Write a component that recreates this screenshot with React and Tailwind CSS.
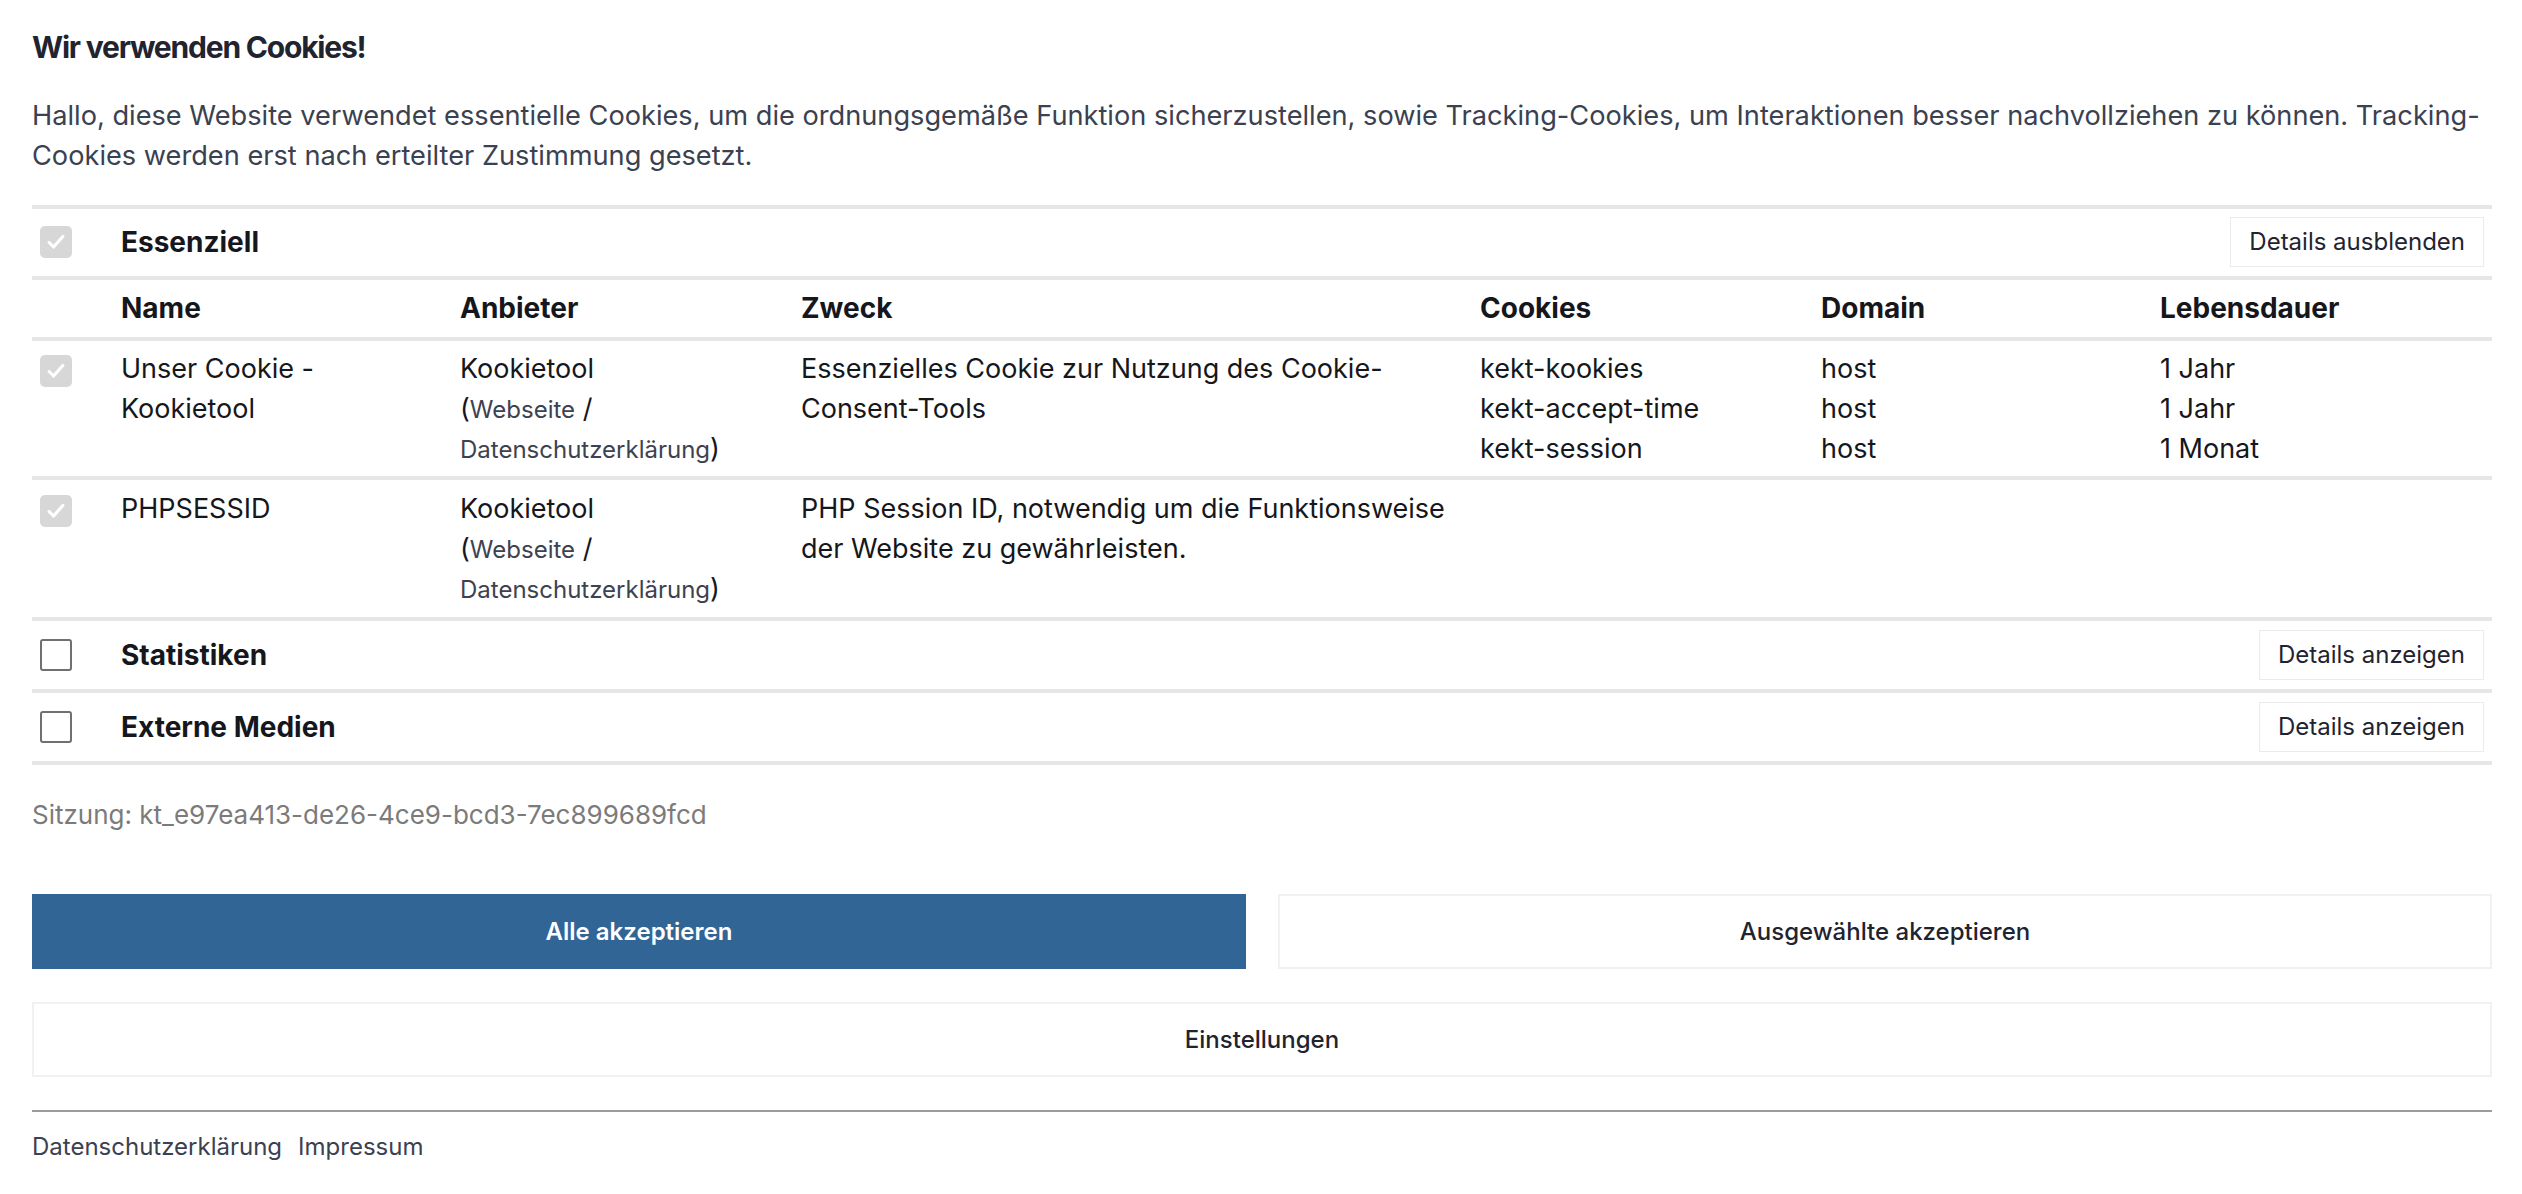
import React from "react";

function CheckedBox() {
  return (
    <div className="w-8 h-8 rounded-[5px] bg-[#d7d7d7] flex items-center justify-center">
      <svg width="22" height="22" viewBox="0 0 24 24" fill="none">
        <path d="M4.5 12.5l4.8 5L19.5 6" stroke="#ffffff" strokeWidth="3.4" strokeLinecap="round" strokeLinejoin="round" />
      </svg>
    </div>
  );
}

function EmptyBox() {
  return <div className="w-8 h-8 rounded-[3px] border-2 border-[#707070] bg-white" />;
}

function DetailsButton({ children }) {
  return (
    <button className="h-[50px] px-[18px] border border-[#ebebeb] bg-white text-[24px] leading-[30px] text-[#1f2430] mr-2">
      {children}
    </button>
  );
}

function CategoryRow({ checked, label, button, className = "" }) {
  return (
    <div className={"flex items-center border-b-4 border-[#e6e6e6] " + className}>
      <div className="w-[89px] pl-2 flex items-center">{checked ? <CheckedBox /> : <EmptyBox />}</div>
      <div className="flex-1 text-[28px] leading-[40px] font-bold text-[#15171c]">{label}</div>
      <DetailsButton>{button}</DetailsButton>
    </div>
  );
}

const gridCols = "grid grid-cols-[89px_339px_341px_679px_341px_339px_1fr]";

function Provider() {
  return (
    <div className="text-[27px] leading-[40px] text-[#15171c]">
      <div className="h-[40px]">Kookietool</div>
      <div className="h-[40px] whitespace-nowrap">
        (<span className="text-[24px] leading-none text-[#3d4250]">Webseite</span> /
      </div>
      <div className="h-[40px] whitespace-nowrap">
        <span className="text-[24px] leading-none text-[#3d4250]">Datenschutzerklärung</span>)
      </div>
    </div>
  );
}

export default function App() {
  return (
    <div className="min-h-screen bg-white pl-8 pr-[30px] pt-[29px] font-['Inter','Noto_Sans',sans-serif]">
      <h2 className="text-[30px] leading-[36px] font-bold tracking-[-0.04em] text-[#1f2430]">Wir verwenden Cookies!</h2>
      <p className="mt-[31px] text-[27.2px] leading-[40px] text-[#3a4150]">
        Hallo, diese Website verwendet essentielle Cookies, um die ordnungsgemäße Funktion sicherzustellen, sowie Tracking-Cookies, um Interaktionen besser nachvollziehen zu können. Tracking-Cookies werden erst nach erteilter Zustimmung gesetzt.
      </p>

      <div className="mt-[29px] border-t-4 border-[#e6e6e6]">
        <CategoryRow checked label="Essenziell" button="Details ausblenden" className="pt-2 pb-[9px]" />

        <div className={gridCols + " pt-2 pb-[9px] border-b-4 border-[#e6e6e6] text-[28px] leading-[40px] font-bold text-[#15171c]"}>
          <div />
          <div>Name</div>
          <div>Anbieter</div>
          <div>Zweck</div>
          <div>Cookies</div>
          <div>Domain</div>
          <div>Lebensdauer</div>
        </div>

        <div className={gridCols + " pt-2 pb-[7px] border-b-4 border-[#e6e6e6] text-[27px] leading-[40px] text-[#15171c]"}>
          <div className="pl-2 pt-[6px]"><CheckedBox /></div>
          <div className="whitespace-nowrap">Unser Cookie -<br />Kookietool</div>
          <Provider />
          <div className="whitespace-nowrap">Essenzielles Cookie zur Nutzung des Cookie-<br />Consent-Tools</div>
          <div className="whitespace-nowrap">kekt-kookies<br />kekt-accept-time<br />kekt-session</div>
          <div>host<br />host<br />host</div>
          <div className="whitespace-nowrap">1 Jahr<br />1 Jahr<br />1 Monat</div>
        </div>

        <div className={gridCols + " pt-[9px] pb-2 border-b-4 border-[#e6e6e6] text-[27px] leading-[40px] text-[#15171c]"}>
          <div className="pl-2 pt-[6px]"><CheckedBox /></div>
          <div>PHPSESSID</div>
          <Provider />
          <div className="whitespace-nowrap">PHP Session ID, notwendig um die Funktionsweise<br />der Website zu gewährleisten.</div>
          <div />
          <div />
          <div />
        </div>

        <CategoryRow label="Statistiken" button="Details anzeigen" className="py-[9px]" />
        <CategoryRow label="Externe Medien" button="Details anzeigen" className="py-[9px]" />
      </div>

      <div className="mt-[30px] text-[26px] leading-[40px] text-[#7b7b7b]">Sitzung: kt_e97ea413-de26-4ce9-bcd3-7ec899689fcd</div>

      <div className="mt-[59px] grid grid-cols-2 gap-8">
        <button className="h-[75px] bg-[#316595] text-white text-[24px] font-semibold">Alle akzeptieren</button>
        <button className="h-[75px] bg-white border-2 border-[#f1f1f1] text-[#1f2430] text-[24px] font-medium">Ausgewählte akzeptieren</button>
      </div>
      <button className="mt-[33px] w-full h-[75px] bg-white border-2 border-[#f1f1f1] text-[#1f2430] text-[24px] font-medium">Einstellungen</button>

      <div className="mt-[33px] border-t-2 border-[#9c9c9c] pt-[17px] flex gap-4 text-[24px] leading-[36px] text-[#3b4150]">
        <span>Datenschutzerklärung</span>
        <span>Impressum</span>
      </div>
    </div>
  );
}
